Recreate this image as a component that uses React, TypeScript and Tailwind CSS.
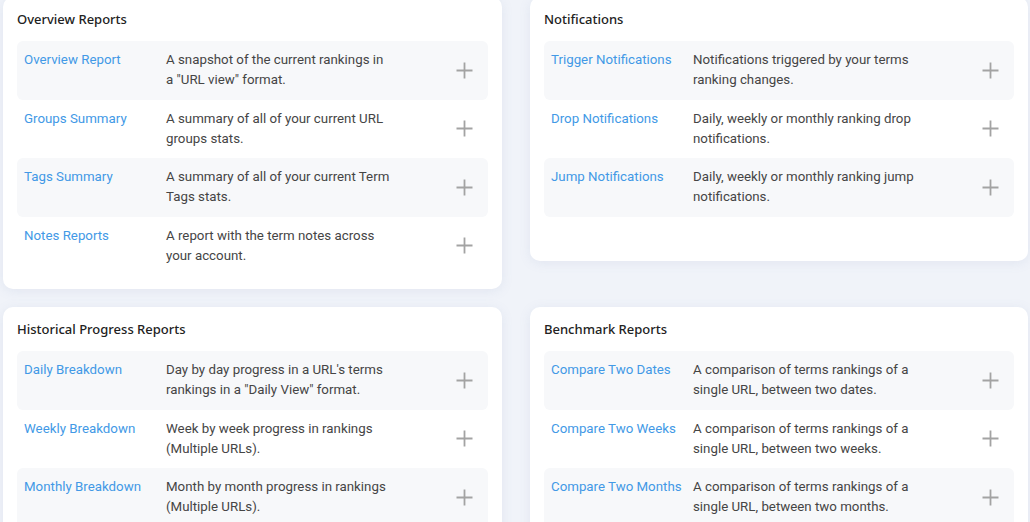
import React from "react";

interface ReportItem {
  name: string;
  desc: string;
}

interface ReportCardProps {
  title: string;
  items: ReportItem[];
  className?: string;
}

const overview: ReportItem[] = [
  { name: "Overview Report", desc: 'A snapshot of the current rankings in a "URL view" format.' },
  { name: "Groups Summary", desc: "A summary of all of your current URL groups stats." },
  { name: "Tags Summary", desc: "A summary of all of your current Term Tags stats." },
  { name: "Notes Reports", desc: "A report with the term notes across your account." },
];

const notifications: ReportItem[] = [
  { name: "Trigger Notifications", desc: "Notifications triggered by your terms ranking changes." },
  { name: "Drop Notifications", desc: "Daily, weekly or monthly ranking drop notifications." },
  { name: "Jump Notifications", desc: "Daily, weekly or monthly ranking jump notifications." },
];

const historical: ReportItem[] = [
  { name: "Daily Breakdown", desc: 'Day by day progress in a URL\'s terms rankings in a "Daily View" format.' },
  { name: "Weekly Breakdown", desc: "Week by week progress in rankings (Multiple URLs)." },
  { name: "Monthly Breakdown", desc: "Month by month progress in rankings (Multiple URLs)." },
];

const benchmark: ReportItem[] = [
  { name: "Compare Two Dates", desc: "A comparison of terms rankings of a single URL, between two dates." },
  { name: "Compare Two Weeks", desc: "A comparison of terms rankings of a single URL, between two weeks." },
  { name: "Compare Two Months", desc: "A comparison of terms rankings of a single URL, between two months." },
];

const PlusIcon = () => (
  <svg width="17" height="17" viewBox="0 0 17 17" fill="none" stroke="#a3a3a3" strokeWidth="1.8">
    <path d="M8.5 0.5v16M0.5 8.5h16" />
  </svg>
);

const ReportCard: React.FC<ReportCardProps> = ({ title, items, className = "" }) => {
  return (
    <div
      className={`bg-white rounded-[10px] shadow-[0_2px_12px_rgba(120,140,180,0.12)] px-[14px] pt-[13px] pb-[14px] ${className}`}
    >
      <h2 className="text-[13px] font-medium text-[#222] leading-[18px] mb-[13px] font-['Noto_Sans',sans-serif]">
        {title}
      </h2>
      <div className="flex flex-col">
        {items.map((item, index) => (
          <div
            key={item.name}
            className={`flex items-center h-[58.5px] rounded-[6px] pl-[7px] pr-[15px] ${
              index % 2 === 0 ? "bg-[#f7f8fa]" : "bg-white"
            }`}
          >
            <div className="self-start pt-[9px] w-[142px] shrink-0 text-[13.3px] leading-[20px] text-[#4299e6]">
              {item.name}
            </div>
            <div className="w-[225px] text-[13.3px] leading-[20px] text-[#454545]">{item.desc}</div>
            <div className="ml-auto flex items-center">
              <PlusIcon />
            </div>
          </div>
        ))}
      </div>
    </div>
  );
};

export default function App() {
  return (
    <div className="w-[1030px] h-[522px] overflow-hidden bg-[#f0f3f9] font-['Roboto',sans-serif]">
      <div className="-mt-[3px] pl-[3px] grid grid-cols-[499px_498px] gap-x-[28px] gap-y-[18px] items-start">
        <ReportCard title="Overview Reports" items={overview} />
        <ReportCard title="Notifications" items={notifications} className="h-[264px]" />
        <ReportCard title="Historical Progress Reports" items={historical} />
        <ReportCard title="Benchmark Reports" items={benchmark} />
      </div>
    </div>
  );
}
